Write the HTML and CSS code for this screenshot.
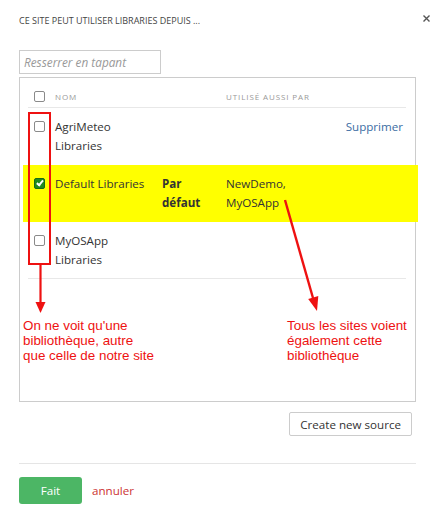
FILE: index.html
```html
<!DOCTYPE html>
<html lang="fr">
<head>
    <meta charset="UTF-8">
    <meta name="viewport" content="width=device-width, initial-scale=1.0">
    <title>Sources des bibliothèques</title>
    <link rel="stylesheet" href="styles.css">
</head>
<body>

    <div class="dialog">
        <div class="dialog-head">
            <h1>Ce site peut utiliser Libraries depuis ...</h1>
            <button class="close" title="Fermer">
                <svg width="7" height="7" viewBox="0 0 7 7"><path d="M0.5 0.5L6.5 6.5M6.5 0.5L0.5 6.5" stroke="#555" stroke-width="1.4"/></svg>
            </button>
        </div>

        <input class="filter" type="text" placeholder="Resserrer en tapant">

        <div class="sources">
            <div class="row row-head">
                <div class="col-check"><span class="check"></span></div>
                <div class="col-name">Nom</div>
                <div class="col-default"></div>
                <div class="col-used">Utilisé aussi par</div>
            </div>
            <div class="row">
                <div class="col-check"><span class="check"></span></div>
                <div class="col-name">AgriMeteo Libraries</div>
                <div class="col-default"></div>
                <div class="col-used"></div>
                <div class="col-action"><a href="#">Supprimer</a></div>
            </div>
            <div class="row highlight">
                <div class="col-check"><span class="check checked"></span></div>
                <div class="col-name">Default Libraries</div>
                <div class="col-default"><b>Par défaut</b></div>
                <div class="col-used">NewDemo, MyOSApp</div>
                <div class="col-action"></div>
            </div>
            <div class="row">
                <div class="col-check"><span class="check"></span></div>
                <div class="col-name">MyOSApp Libraries</div>
                <div class="col-default"></div>
                <div class="col-used"></div>
                <div class="col-action"></div>
            </div>

            <!-- notes de l'explication -->
            <div class="notes">
                <p>On ne voit qu'une<br>bibliothèque, autre<br>que celle de notre site</p>
                <p>Tous les sites voient<br>également cette<br>bibliothèque</p>
            </div>
        </div>

        <div class="source-actions">
            <button class="btn">Create new source</button>
        </div>

        <div class="dialog-foot">
            <button class="btn-done">Fait</button>
            <a href="#" class="cancel">annuler</a>
        </div>

        <svg class="marks" width="435" height="519" viewBox="0 0 435 519">
            <rect x="29" y="113" width="21" height="151" fill="none" stroke="#ee1111" stroke-width="2"/>
            <line x1="40.5" y1="265" x2="40.5" y2="303" stroke="#ee1111" stroke-width="2.2"/>
            <polygon points="35.5,302 45.5,302 40.5,313" fill="#ee1111"/>
            <line x1="285" y1="200" x2="313" y2="298" stroke="#ee1111" stroke-width="2.4"/>
            <polygon points="318.3,296 308.2,299 317,311" fill="#ee1111"/>
        </svg>
    </div>

</body>
</html>
```

FILE: styles.css
```css
body {
    margin: 0;
    background-color: #fff;
    font-family: 'Open Sans', sans-serif;
    font-size: 11.6px;
    color: #333;
}
.dialog {
    position: relative;
    width: 435px;
    height: 519px;
    padding: 0 19px;
    box-sizing: border-box;
}
.dialog-head {
    display: flex;
    justify-content: space-between;
    align-items: flex-start;
    padding-top: 14px;
}
.dialog-head h1 {
    margin: 0;
    font-size: 9px;
    font-weight: normal;
    line-height: 14px;
    text-transform: uppercase;
    color: #444;
}
.close {
    border: none;
    background: none;
    padding: 0;
    margin: 1px -14px 0 0;
    width: 7px;
    height: 7px;
    display: flex;
    cursor: pointer;
}
.filter {
    display: block;
    margin-top: 22px;
    width: 142px;
    height: 24px;
    box-sizing: border-box;
    border: 1px solid #ccc;
    padding: 0 4px;
    font-family: 'Open Sans', sans-serif;
    font-size: 11.8px;
}
.filter::placeholder {
    color: #999;
    font-style: italic;
}
.sources {
    margin-top: 3px;
    border: 1px solid #ccc;
    padding: 0 9px 0 8px;
}
.row {
    display: flex;
    padding: 9px 0;
    line-height: 19px;
    border-bottom: 1px solid #e8e8e8;
}
.row:has(+ .highlight) {
    border-bottom-color: transparent;
}
.row.highlight {
    background-color: #ffff00;
    border-bottom-color: #ffff00;
    margin: 0 -12px 0 -5px;
    padding-left: 5px;
    padding-right: 12px;
}
.row-head {
    padding: 10px 0 3px;
    line-height: 16px;
    font-size: 8px;
    letter-spacing: 0.9px;
    text-transform: uppercase;
    color: #999;
}
.row-head .col-name, .row-head .col-used {
    padding-top: 2px;
    line-height: 14px;
}
.col-check {
    width: 27px;
    flex-shrink: 0;
    display: flex;
    align-items: flex-start;
}
.row .check {
    margin: 4px 0 0 6px;
}
.row-head .check {
    margin-top: 3px;
}
.check {
    display: block;
    width: 11px;
    height: 11px;
    box-sizing: border-box;
    border: 1px solid #8a8a8a;
    border-radius: 2px;
    background-color: #fff;
}
.check.checked {
    background-color: #1f8a1f;
    border-color: #176b17;
    position: relative;
}
.check.checked::after {
    content: '';
    position: absolute;
    left: 3px;
    top: 0px;
    width: 2px;
    height: 5px;
    border: solid #fff;
    border-width: 0 2px 2px 0;
    transform: rotate(40deg);
}
.col-name {
    width: 96px;
    padding-right: 11px;
    flex-shrink: 0;
}
.col-default {
    width: 50px;
    padding-right: 14px;
    flex-shrink: 0;
}
.col-used {
    width: 92px;
    flex-shrink: 0;
}
.row-head .col-used {
    width: auto;
}
.col-action {
    flex: 1;
    text-align: right;
    padding-right: 3px;
}
.col-action a {
    color: #3b6da3;
    text-decoration: none;
}
.notes {
    display: grid;
    grid-template-columns: 264px 1fr;
    margin: 39px -6px 38px -5px;
    font-family: 'Liberation Sans', Arial, sans-serif;
    font-size: 13.4px;
    line-height: 15px;
    color: #ee1111;
}
.notes p {
    margin: 0;
}
.source-actions {
    display: flex;
    justify-content: flex-end;
    margin-top: 10px;
    padding-right: 4px;
}
.btn {
    height: 24px;
    padding: 0 10px;
    background-color: #fff;
    border: 1px solid #ccc;
    border-radius: 2px;
    font-family: 'Open Sans', sans-serif;
    font-size: 11.6px;
    color: #333;
    cursor: pointer;
}
.dialog-foot {
    display: flex;
    align-items: center;
    gap: 10px;
    margin-top: 27px;
    padding-top: 13px;
    border-top: 1px solid #e5e5e5;
}
.btn-done {
    width: 63px;
    height: 27px;
    border: none;
    border-radius: 3px;
    background-color: #4cb665;
    color: #fff;
    font-family: 'Open Sans', sans-serif;
    font-size: 11.6px;
    cursor: pointer;
}
.cancel {
    color: #cc3333;
    text-decoration: none;
}
.marks {
    position: absolute;
    left: 0;
    top: 0;
    pointer-events: none;
}
```
